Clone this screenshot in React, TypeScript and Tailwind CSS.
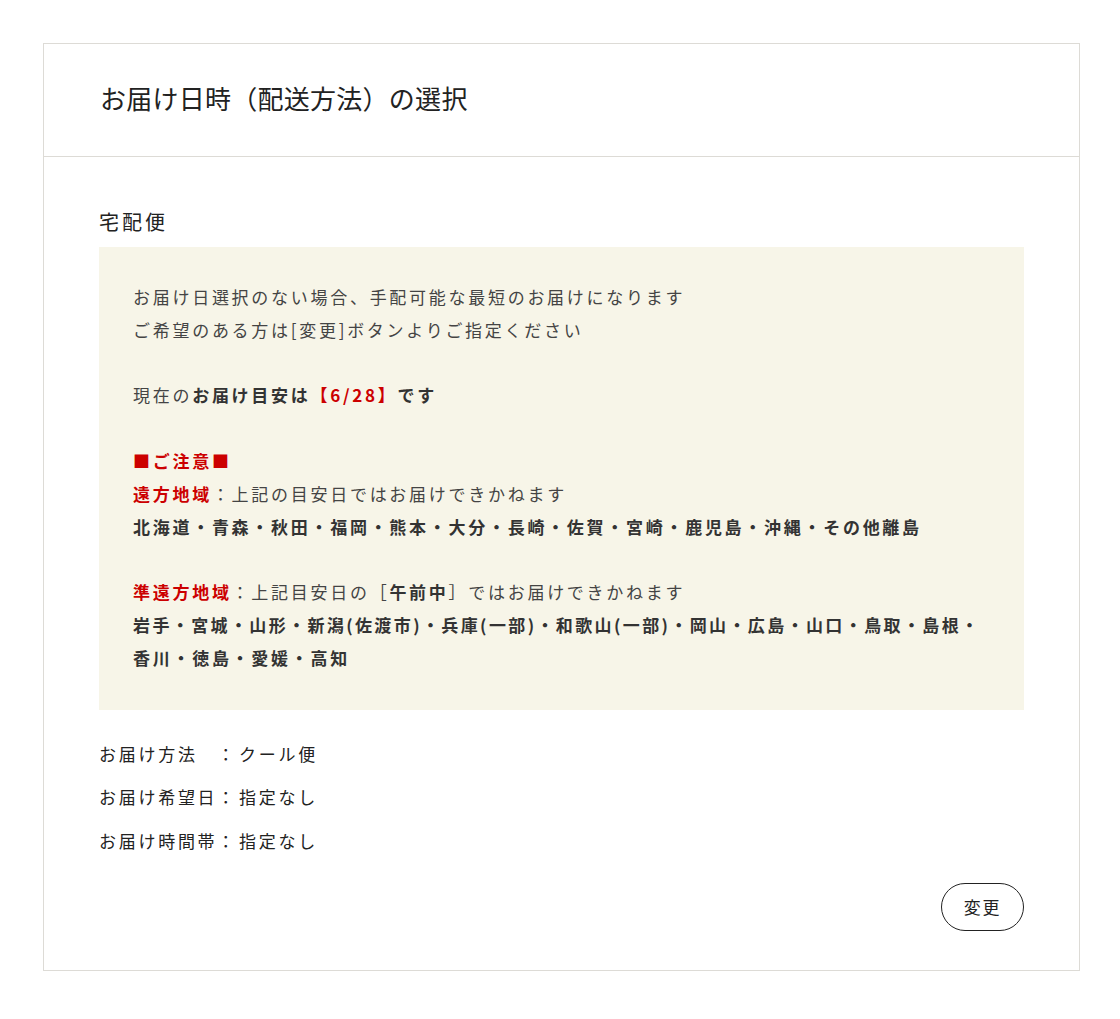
import React from 'react';

const sans = "font-['Noto_Sans_CJK_JP',sans-serif]";

const deliveryRows = [
  { label: 'お届け方法\u3000', value: 'クール便' },
  { label: 'お届け希望日', value: '指定なし' },
  { label: 'お届け時間帯', value: '指定なし' },
];

export default function App() {
  return (
    <div className={`min-h-screen bg-white pt-[43px] pl-[43px] ${sans}`}>
      <div className="w-[1037px] border border-[#dddbd6] bg-white">
        {/* Header */}
        <div className="h-[113px] flex items-center pl-[56px] border-b border-[#dddbd6]">
          <h1 className="text-[26px] text-[#222] tracking-[0.01em] font-['Liberation_Serif','Noto_Sans_CJK_JP',serif]">
            お届け日時（配送方法）の選択
          </h1>
        </div>

        {/* Body */}
        <div className="px-[55px] pt-[50px] pb-[39px]">
          <h2 className="text-[20px] leading-[30px] text-[#222] tracking-[0.15em] mb-[10px]">宅配便</h2>

          <div className="bg-[#f7f5e8] px-[34px] pt-[34px] pb-[35px] text-[17px] leading-[32.8px] tracking-[0.16em] text-[#444]">
            <p>
              お届け日選択のない場合、手配可能な最短のお届けになります
              <br />
              ご希望のある方は[変更]ボタンよりご指定ください
            </p>
            <br />
            <p>
              現在の
              <b className="font-bold text-[#333]">
                お届け目安は<span className="text-[#cc0000]">【6/28】</span>です
              </b>
            </p>
            <br />
            <p className="font-bold text-[#cc0000]">■ご注意■</p>
            <p>
              <span className="font-bold text-[#cc0000]">遠方地域</span>：上記の目安日ではお届けできかねます
            </p>
            <p className="font-bold text-[#333]">
              北海道・青森・秋田・福岡・熊本・大分・長崎・佐賀・宮崎・鹿児島・沖縄・その他離島
            </p>
            <br />
            <p>
              <span className="font-bold text-[#cc0000]">準遠方地域</span>：上記目安日の［
              <b className="font-bold text-[#333]">午前中</b>］ではお届けできかねます
            </p>
            <p className="font-bold text-[#333]">
              <span className="whitespace-nowrap tracking-[0.14em]">
                岩手・宮城・山形・新潟(佐渡市)・兵庫(一部)・和歌山(一部)・岡山・広島・山口・鳥取・島根・
              </span>
              <br />
              香川・徳島・愛媛・高知
            </p>
          </div>

          <div className="mt-[27px] flex flex-col gap-[10px] text-[17px] leading-[33.5px] tracking-[0.16em] text-[#222]">
            {deliveryRows.map((row) => (
              <div key={row.label} className="flex">
                <span>{row.label}</span>
                <span className="mr-[2px]">：</span>
                <span>{row.value}</span>
              </div>
            ))}
          </div>

          <div className="flex justify-end mt-[26px]">
            <button
              type="button"
              className="w-[83px] h-[48px] rounded-full border border-[#222] text-[17px] tracking-[0.1em] text-[#222] bg-white"
            >
              変更
            </button>
          </div>
        </div>
      </div>
    </div>
  );
}
